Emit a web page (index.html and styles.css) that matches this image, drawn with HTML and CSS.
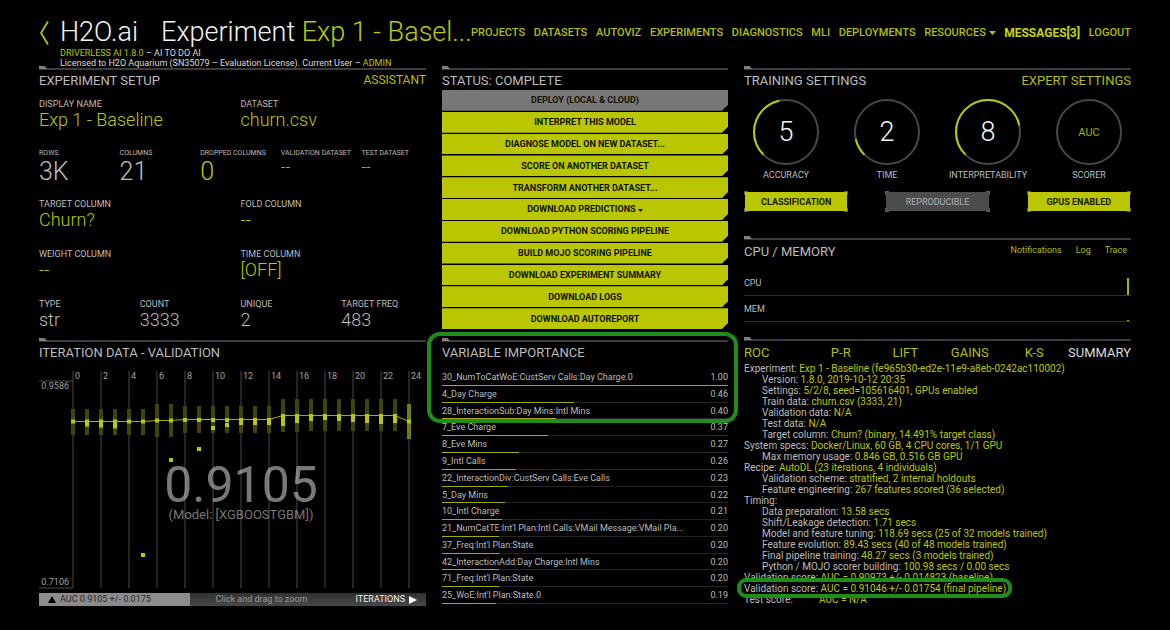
FILE: index.html
```html
<!DOCTYPE html>
<html lang="en">
<head>
<meta charset="utf-8">
<title>H2O.ai Experiment</title>
<link rel="stylesheet" href="styles.css">
</head>
<body>
<header class="top">
  <div class="brand">
    <a class="back" href="#" aria-label="Back"><svg width="10" height="26" viewBox="0 0 10 26"><path d="M9 1.500 2 13l7 11.500" fill="none" stroke="#b9c80a" stroke-width="1.700"/></svg></a>
    <div class="brand-text">
      <h1 class="title"><span class="logo">H2O.ai</span><span class="name">Experiment <span class="lime">Exp 1 - Basel...</span></span></h1>
      <p class="license"><span class="lime">DRIVERLESS AI 1.8.0</span> – AI TO DO AI<br>Licensed to H2O Aquarium (SN35079 – Evaluation License). Current User – <span class="lime">ADMIN</span></p>
    </div>
  </div>
  <nav class="nav">
    <a href="#">PROJECTS</a><a href="#">DATASETS</a><a href="#">AUTOVIZ</a><a href="#">EXPERIMENTS</a><a href="#">DIAGNOSTICS</a><a href="#">MLI</a><a href="#">DEPLOYMENTS</a><a href="#">RESOURCES <svg class="caret" width="7" height="4" viewBox="0 0 7 4"><path d="M0 0h7L3.500 4z" fill="currentColor"/></svg></a><a class="strong" href="#">MESSAGES[3]</a><a href="#">LOGOUT</a>
  </nav>
</header>

<main class="board">
  <div class="column">
    <section class="panel setup">
      <div class="head"><h2>EXPERIMENT SETUP</h2><a class="small" href="#">ASSISTANT</a></div>
      <dl class="facts">
        <div class="row two">
          <div><dt>DISPLAY NAME</dt><dd class="edit">Exp 1 - Baseline</dd></div>
          <div><dt>DATASET</dt><dd class="edit">churn.csv</dd></div>
        </div>
        <div class="row five">
          <div><dt>ROWS</dt><dd class="big">3K</dd></div>
          <div><dt>COLUMNS</dt><dd class="big">21</dd></div>
          <div><dt>DROPPED COLUMNS</dt><dd class="big edit">0</dd></div>
          <div><dt>VALIDATION DATASET</dt><dd class="edit dash">--</dd></div>
          <div><dt>TEST DATASET</dt><dd class="edit dash">--</dd></div>
        </div>
        <div class="row two">
          <div><dt>TARGET COLUMN</dt><dd class="edit">Churn?</dd></div>
          <div><dt>FOLD COLUMN</dt><dd class="edit">--</dd></div>
        </div>
        <div class="row two">
          <div><dt>WEIGHT COLUMN</dt><dd class="edit">--</dd></div>
          <div><dt>TIME COLUMN</dt><dd class="edit">[OFF]</dd></div>
        </div>
        <div class="row four">
          <div><dt>TYPE</dt><dd>str</dd></div>
          <div><dt>COUNT</dt><dd>3333</dd></div>
          <div><dt>UNIQUE</dt><dd>2</dd></div>
          <div><dt>TARGET FREQ</dt><dd>483</dd></div>
        </div>
      </dl>
    </section>
    <section class="panel">
      <div class="head"><h2>ITERATION DATA - VALIDATION</h2></div>
      <svg class="chart" viewBox="0 0 387 222" role="img" aria-label="Validation score by iteration">
        <path class="grid" d="M34 1V218M62 1V218M90 1V218M118 1V218M146 1V218M174 1V218M202 1V218M230 1V218M258 1V218M286 1V218M314 1V218M342 1V218M370 1V218M0 11H34M0 218H34"/>
        <g class="ticks">
          <text x="36" y="9">0</text><text x="64" y="9">2</text><text x="92" y="9">4</text><text x="120" y="9">6</text><text x="148" y="9">8</text><text x="176" y="9">10</text><text x="204" y="9">12</text><text x="232" y="9">14</text><text x="260" y="9">16</text><text x="288" y="9">18</text><text x="316" y="9">20</text><text x="344" y="9">22</text><text x="372" y="9">24</text>
          <text class="end" x="30" y="19">0.9586</text><text class="end" x="30" y="215">0.7106</text>
        </g>
        <path class="range" d="M34 39V65M48 39V65M62 39V65M76 39V65M90 39V65M104 39V65M118 34V67M132 34V67M146 36V63M160 36V63M174 36V63M188 36V63M202 36V63M216 36V63M230 36V63M244 29V62M258 29V62M272 29V61M286 29V61M300 29V61M314 29V61M328 29V61M342 29V61M356 29V61"/>
        <path class="range last" d="M370 34V69"/>
        <path class="trend" d="M34 51.500H104L118 50.500H132L146 49.500H230L244 45.500H356L370 51.500"/>
        <path class="score" d="M34 49.500v4M48 49.500v7M62 49.500v8M76 49.500v9M90 49.500v4M104 49.500v4M118 48.500v4M132 48.500v4M146 48v4M160 48v4M174 48v4M174 56v4M188 48v4M188 53v4M202 48v7M216 48v7M230 48v7M244 44v12M258 44v9M272 44v7M286 44v6M300 44v7M314 44v8M328 44v9M342 44v10M356 44v9M370 49.500v4M104 183v4M132 88v4M160 77v4"/>
        <text class="best" x="202" y="132">0.9105</text>
        <text class="model" x="202" y="149">(Model: [XGBOOSTGBM])</text>
      </svg>
      <div class="chartbar">
        <span class="auc"><svg width="8" height="7" viewBox="0 0 8 7"><path d="M4 0 8 7H0z" fill="#000"/></svg>AUC 0.9105 +/- 0.0175</span>
        <span class="hint">Click and drag to zoom</span>
        <span class="axis">ITERATIONS<svg width="8" height="8" viewBox="0 0 8 8"><path d="M0 0 8 4 0 8z" fill="#fff"/></svg></span>
      </div>
    </section>
  </div>

  <div class="column">
    <section class="panel status">
      <div class="head"><h2>STATUS: COMPLETE</h2></div>
      <div class="actions">
        <button class="off">DEPLOY (LOCAL &amp; CLOUD)</button>
        <button>INTERPRET THIS MODEL</button>
        <button>DIAGNOSE MODEL ON NEW DATASET...</button>
        <button>SCORE ON ANOTHER DATASET</button>
        <button>TRANSFORM ANOTHER DATASET...</button>
        <button>DOWNLOAD PREDICTIONS <svg class="caret" width="5" height="3" viewBox="0 0 7 4"><path d="M0 0h7L3.500 4z" fill="currentColor"/></svg></button>
        <button>DOWNLOAD PYTHON SCORING PIPELINE</button>
        <button>BUILD MOJO SCORING PIPELINE</button>
        <button>DOWNLOAD EXPERIMENT SUMMARY</button>
        <button>DOWNLOAD LOGS</button>
        <button>DOWNLOAD AUTOREPORT</button>
      </div>
    </section>
    <section class="panel importance">
      <div class="head"><h2>VARIABLE IMPORTANCE</h2></div>
      <ul class="vars">
        <li><span>30_NumToCatWoE:CustServ Calls:Day Charge.0</span><b>1.00</b><i style="width:100%"></i></li>
        <li><span>4_Day Charge</span><b>0.46</b><i style="width:46%"></i></li>
        <li><span>28_InteractionSub:Day Mins:Intl Mins</span><b>0.40</b><i style="width:40%"></i></li>
        <li><span>7_Eve Charge</span><b>0.37</b><i style="width:37%"></i></li>
        <li><span>8_Eve Mins</span><b>0.27</b><i style="width:27%"></i></li>
        <li><span>9_Intl Calls</span><b>0.26</b><i style="width:26%"></i></li>
        <li><span>22_InteractionDiv:CustServ Calls:Eve Calls</span><b>0.23</b><i style="width:23%"></i></li>
        <li><span>5_Day Mins</span><b>0.22</b><i style="width:22%"></i></li>
        <li><span>10_Intl Charge</span><b>0.21</b><i style="width:21%"></i></li>
        <li><span>21_NumCatTE:Int'l Plan:Intl Calls:VMail Message:VMail Pla...</span><b>0.20</b><i style="width:20%"></i></li>
        <li><span>37_Freq:Int'l Plan:State</span><b>0.20</b><i style="width:20%"></i></li>
        <li><span>42_InteractionAdd:Day Charge:Intl Mins</span><b>0.20</b><i style="width:20%"></i></li>
        <li><span>71_Freq:Int'l Plan:State</span><b>0.20</b><i style="width:20%"></i></li>
        <li><span>25_WoE:Int'l Plan:State.0</span><b>0.19</b><i style="width:19%"></i></li>
      </ul>
    </section>
  </div>

  <div class="column">
    <section class="panel training">
      <div class="head"><h2>TRAINING SETTINGS</h2><a href="#">EXPERT SETTINGS</a></div>
      <div class="gauges">
        <div class="gauge"><svg viewBox="0 0 68 68"><circle cx="34" cy="34" r="32"/><circle class="arc" cx="34" cy="34" r="32" pathLength="360" stroke-dasharray="123 360" transform="rotate(135 34 34)"/><text x="34" y="43">5</text></svg><span>ACCURACY</span></div>
        <div class="gauge"><svg viewBox="0 0 68 68"><circle cx="34" cy="34" r="32"/><circle class="arc" cx="34" cy="34" r="32" pathLength="360" stroke-dasharray="32 360" transform="rotate(135 34 34)"/><text x="34" y="43">2</text></svg><span>TIME</span></div>
        <div class="gauge"><svg viewBox="0 0 68 68"><circle cx="34" cy="34" r="32"/><circle class="arc" cx="34" cy="34" r="32" pathLength="360" stroke-dasharray="213 360" transform="rotate(135 34 34)"/><text x="34" y="43">8</text></svg><span>INTERPRETABILITY</span></div>
        <div class="gauge"><svg viewBox="0 0 68 68"><circle cx="34" cy="34" r="32"/><text class="scorer" x="34" y="38">AUC</text></svg><span>SCORER</span></div>
      </div>
      <div class="chips">
        <button>CLASSIFICATION</button><button class="off">REPRODUCIBLE</button><button>GPUS ENABLED</button>
      </div>
    </section>
    <section class="panel cpu">
      <div class="head"><h2>CPU / MEMORY</h2><div class="links"><a href="#">Notifications</a><a href="#">Log</a><a href="#">Trace</a></div></div>
      <div class="meter"><span>CPU</span><i class="load"></i></div>
      <div class="meter"><span>MEM</span><i class="dot"></i></div>
    </section>
    <section class="panel">
      <div class="head tabs"><a href="#">ROC</a><a href="#">P-R</a><a href="#">LIFT</a><a href="#">GAINS</a><a href="#">K-S</a><a class="current" href="#">SUMMARY</a></div>
      <div class="summary">
        <p>Experiment: <em>Exp 1 - Baseline (fe965b30-ed2e-11e9-a8eb-0242ac110002)</em></p>
        <p class="sub">Version: <em>1.8.0, 2019-10-12 20:35</em></p>
        <p class="sub">Settings: <em>5/2/8, seed=105616401, GPUs enabled</em></p>
        <p class="sub">Train data: <em>churn.csv (3333, 21)</em></p>
        <p class="sub">Validation data: <em>N/A</em></p>
        <p class="sub">Test data: <em>N/A</em></p>
        <p class="sub">Target column: <em>Churn? (binary, 14.491% target class)</em></p>
        <p>System specs: <em>Docker/Linux, 60 GB, 4 CPU cores, 1/1 GPU</em></p>
        <p class="sub">Max memory usage: <em>0.846 GB, 0.516 GB GPU</em></p>
        <p>Recipe: <em>AutoDL (23 iterations, 4 individuals)</em></p>
        <p class="sub">Validation scheme: <em>stratified, 2 internal holdouts</em></p>
        <p class="sub">Feature engineering: <em>267 features scored (36 selected)</em></p>
        <p>Timing:</p>
        <p class="sub">Data preparation: <em>13.58 secs</em></p>
        <p class="sub">Shift/Leakage detection: <em>1.71 secs</em></p>
        <p class="sub">Model and feature tuning: <em>118.69 secs (25 of 32 models trained)</em></p>
        <p class="sub">Feature evolution: <em>89.43 secs (40 of 48 models trained)</em></p>
        <p class="sub">Final pipeline training: <em>48.27 secs (3 models trained)</em></p>
        <p class="sub">Python / MOJO scorer building: <em>100.98 secs / 0.00 secs</em></p>
        <p>Validation score: <em>AUC = 0.90973 +/- 0.014823 (baseline)</em></p>
        <p class="final">Validation score: <em>AUC = 0.91046 +/- 0.01754 (final pipeline)</em></p>
        <p class="test"><span>Test score:</span><em>AUC = N/A</em></p>
      </div>
    </section>
  </div>
</main>
</body>
</html>
```

FILE: styles.css
```css
*, *::before, *::after { box-sizing: border-box; }
body {
  margin: 0;
  padding: 0 39px 20px;
  background: #000;
  color: #bcbcbc;
  font-family: Roboto, "Liberation Sans", sans-serif;
  font-size: 9px;
}
h1, h2, p, dl, dd, ul { margin: 0; padding: 0; font-weight: 400; }
a { color: #b0be0c; text-decoration: none; }
svg { flex: none; }
button { border: 0; padding: 0; font: inherit; cursor: pointer; }
.lime { color: #b9c80a; }

.top {
  display: grid;
  grid-template-columns: minmax(0, 36fr) minmax(0, 55fr);
  height: 66px;
}
.brand { display: flex; gap: 11px; padding-top: 16px; }
.back { padding-top: 4px; }
.brand-text { white-space: nowrap; }
.title {
  display: flex;
  gap: 23px;
  color: #f4f4f4;
  font-size: 27px;
  font-weight: 300;
  line-height: 32px;
}
.license { color: #dcdcdc; line-height: 10px; }
.nav {
  display: flex;
  justify-content: space-between;
  padding-top: 25px;
  font-size: 11px;
  font-weight: 500;
  line-height: 16px;
  white-space: nowrap;
}
.nav .strong { color: #c6d60c; font-size: 12px; font-weight: 700; }
.caret { vertical-align: middle; }

.board {
  display: grid;
  grid-template-columns: minmax(0, 387fr) minmax(0, 286fr) minmax(0, 387fr);
  gap: 16px;
}
.column { display: flex; flex-direction: column; }
.panel {
  position: relative;
  padding-top: 4px;
  background: linear-gradient(#3c3c3c, #3c3c3c) 0 2px / 100% 2px no-repeat;
}
.panel::before {
  content: "";
  position: absolute;
  top: 0;
  left: 0;
  width: 8px;
  height: 3px;
  background: #808080;
  clip-path: polygon(0 0, 70% 0, 100% 100%, 0 100%);
}
.head { display: flex; justify-content: space-between; height: 20px; font-size: 13px; line-height: 22px; }
.head h2 { font-size: 13px; }
.head .small { font-size: 12px; line-height: 20px; }

.setup { padding-bottom: 6px; }
.facts { padding-top: 8px; }
.row { display: grid; height: 50px; white-space: nowrap; }
.row:last-child { height: 34px; }
.two { grid-template-columns: repeat(2, minmax(0, 1fr)); column-gap: 16px; }
.four { grid-template-columns: repeat(4, minmax(0, 1fr)); column-gap: 16px; }
.five { grid-template-columns: repeat(5, minmax(0, 1fr)); column-gap: 16px; }
dt { font-size: 9px; line-height: 12px; }
.five dt { font-size: 7px; line-height: 10px; }
dd { font-size: 18px; font-weight: 300; line-height: 20px; }
dd.big { font-size: 25px; line-height: 28px; }
dd.dash { font-size: 16px; }
.edit { color: #b9c80a; }

.chart { display: block; width: 100%; margin-top: 8px; }
.grid { stroke: #484848; stroke-width: 1; }
.ticks text { fill: #a0a0a0; font-size: 9px; }
.ticks .end { text-anchor: end; }
.range { stroke: #414407; stroke-width: 4; }
.range.last { stroke: #757b12; }
.trend { fill: none; stroke: #a0ac10; stroke-width: 1; }
.score { stroke: #b9c80a; stroke-width: 4; }
.best, .model { fill: #c8c8c8; fill-opacity: .6; text-anchor: middle; }
.best { font-size: 50px; }
.model { font-size: 13px; }
.chartbar {
  display: grid;
  grid-template-columns: 39fr 37fr 24fr;
  margin-top: 1px;
  background: linear-gradient(#303030, #484848);
  line-height: 13px;
  white-space: nowrap;
}
.chartbar span { display: flex; align-items: center; gap: 4px; }
.auc { padding-left: 9px; background: #8c8c8c; color: #282828; }
.hint { justify-content: center; color: #989898; }
.axis { justify-content: flex-end; padding-right: 9px; color: #f0f0f0; }

.status { padding-bottom: 9px; }
.actions { display: grid; grid-auto-rows: 1fr; gap: 1px; height: 239px; }
.actions button {
  background: #bac600;
  color: #101200;
  font-size: 9px;
  font-weight: 700;
  clip-path: polygon(0 0, 100% 0, 100% calc(100% - 6px), calc(100% - 6px) 100%, 0 100%);
}
.actions .off { background: #777; }

.importance::after {
  content: "";
  position: absolute;
  top: -6px;
  left: -15px;
  right: -10px;
  height: 91px;
  border: 4px solid #1f8c1c;
  border-radius: 13px;
}
.vars { display: grid; grid-auto-rows: 1fr; height: 235px; margin-top: 7px; list-style: none; }
.vars li {
  display: flex;
  justify-content: space-between;
  position: relative;
  padding-top: 1px;
  border-bottom: 1px solid #242424;
  line-height: 14px;
  white-space: nowrap;
}
.vars b { font-weight: 400; }
.vars i { position: absolute; left: 0; bottom: -1px; height: 1px; background: #a0aa10; }

.training { padding-bottom: 24px; }
.gauges { display: flex; justify-content: space-between; padding-top: 8px; }
.gauge { display: flex; flex-direction: column; align-items: center; width: 84px; line-height: 12px; }
.gauge svg { width: 68px; margin-bottom: 3px; }
.gauge circle { fill: none; stroke: #484848; stroke-width: 2; }
.gauge .arc { stroke: #b9c80a; }
.gauge text { fill: #f4f4f4; font-size: 27px; font-weight: 300; text-anchor: middle; }
.gauge .scorer { fill: #a0ac14; font-size: 11px; font-weight: 400; }
.chips { display: flex; justify-content: space-between; margin-top: 10px; }
.chips button {
  --face: #bac600;
  --corner: linear-gradient(#606060, #606060);
  width: 27%;
  height: 21px;
  background:
    linear-gradient(var(--face), var(--face)) center / calc(100% - 2px) calc(100% - 2px) no-repeat,
    var(--corner) 0 0 / 4px 4px no-repeat,
    var(--corner) 100% 0 / 4px 4px no-repeat,
    var(--corner) 0 100% / 4px 4px no-repeat,
    var(--corner) 100% 100% / 4px 4px no-repeat;
  color: #181a00;
  font-size: 9px;
  font-weight: 700;
}
.chips .off { --face: #4c4c4c; color: #b0b0b0; font-weight: 400; }

.cpu { padding-bottom: 15px; }
.links { display: flex; gap: 14px; padding-right: 4px; font-size: 9px; line-height: 20px; }
.cpu .head { margin-bottom: 10px; line-height: 24px; }
.meter {
  display: flex;
  justify-content: space-between;
  align-items: flex-end;
  height: 26px;
  padding-right: 2px;
  border-bottom: 1px solid #303030;
}
.meter span { align-self: center; }
.load { width: 2px; height: 17px; background: #a8b412; }
.dot { width: 2px; height: 1px; background: #a8b412; }
.tabs { display: grid; grid-template-columns: repeat(6, minmax(0, 1fr)); text-align: center; line-height: 24px; }
.tabs a:first-child { text-align: left; }
.tabs a:last-child { display: flex; justify-content: flex-end; }
.tabs .current { color: #dcdcdc; }
.summary { padding-top: 2px; font-size: 10px; line-height: 11px; white-space: nowrap; }
.summary em { color: #b9c60e; font-style: normal; }
.sub { padding-left: 18px; }
.final { position: relative; width: max-content; }
.final::after {
  content: "";
  position: absolute;
  top: -5px;
  left: -7px;
  right: -6px;
  height: 20px;
  border: 4px solid #1f8c1c;
  border-radius: 9px;
}
.test { display: flex; }
.test span { width: 75px; }
```
